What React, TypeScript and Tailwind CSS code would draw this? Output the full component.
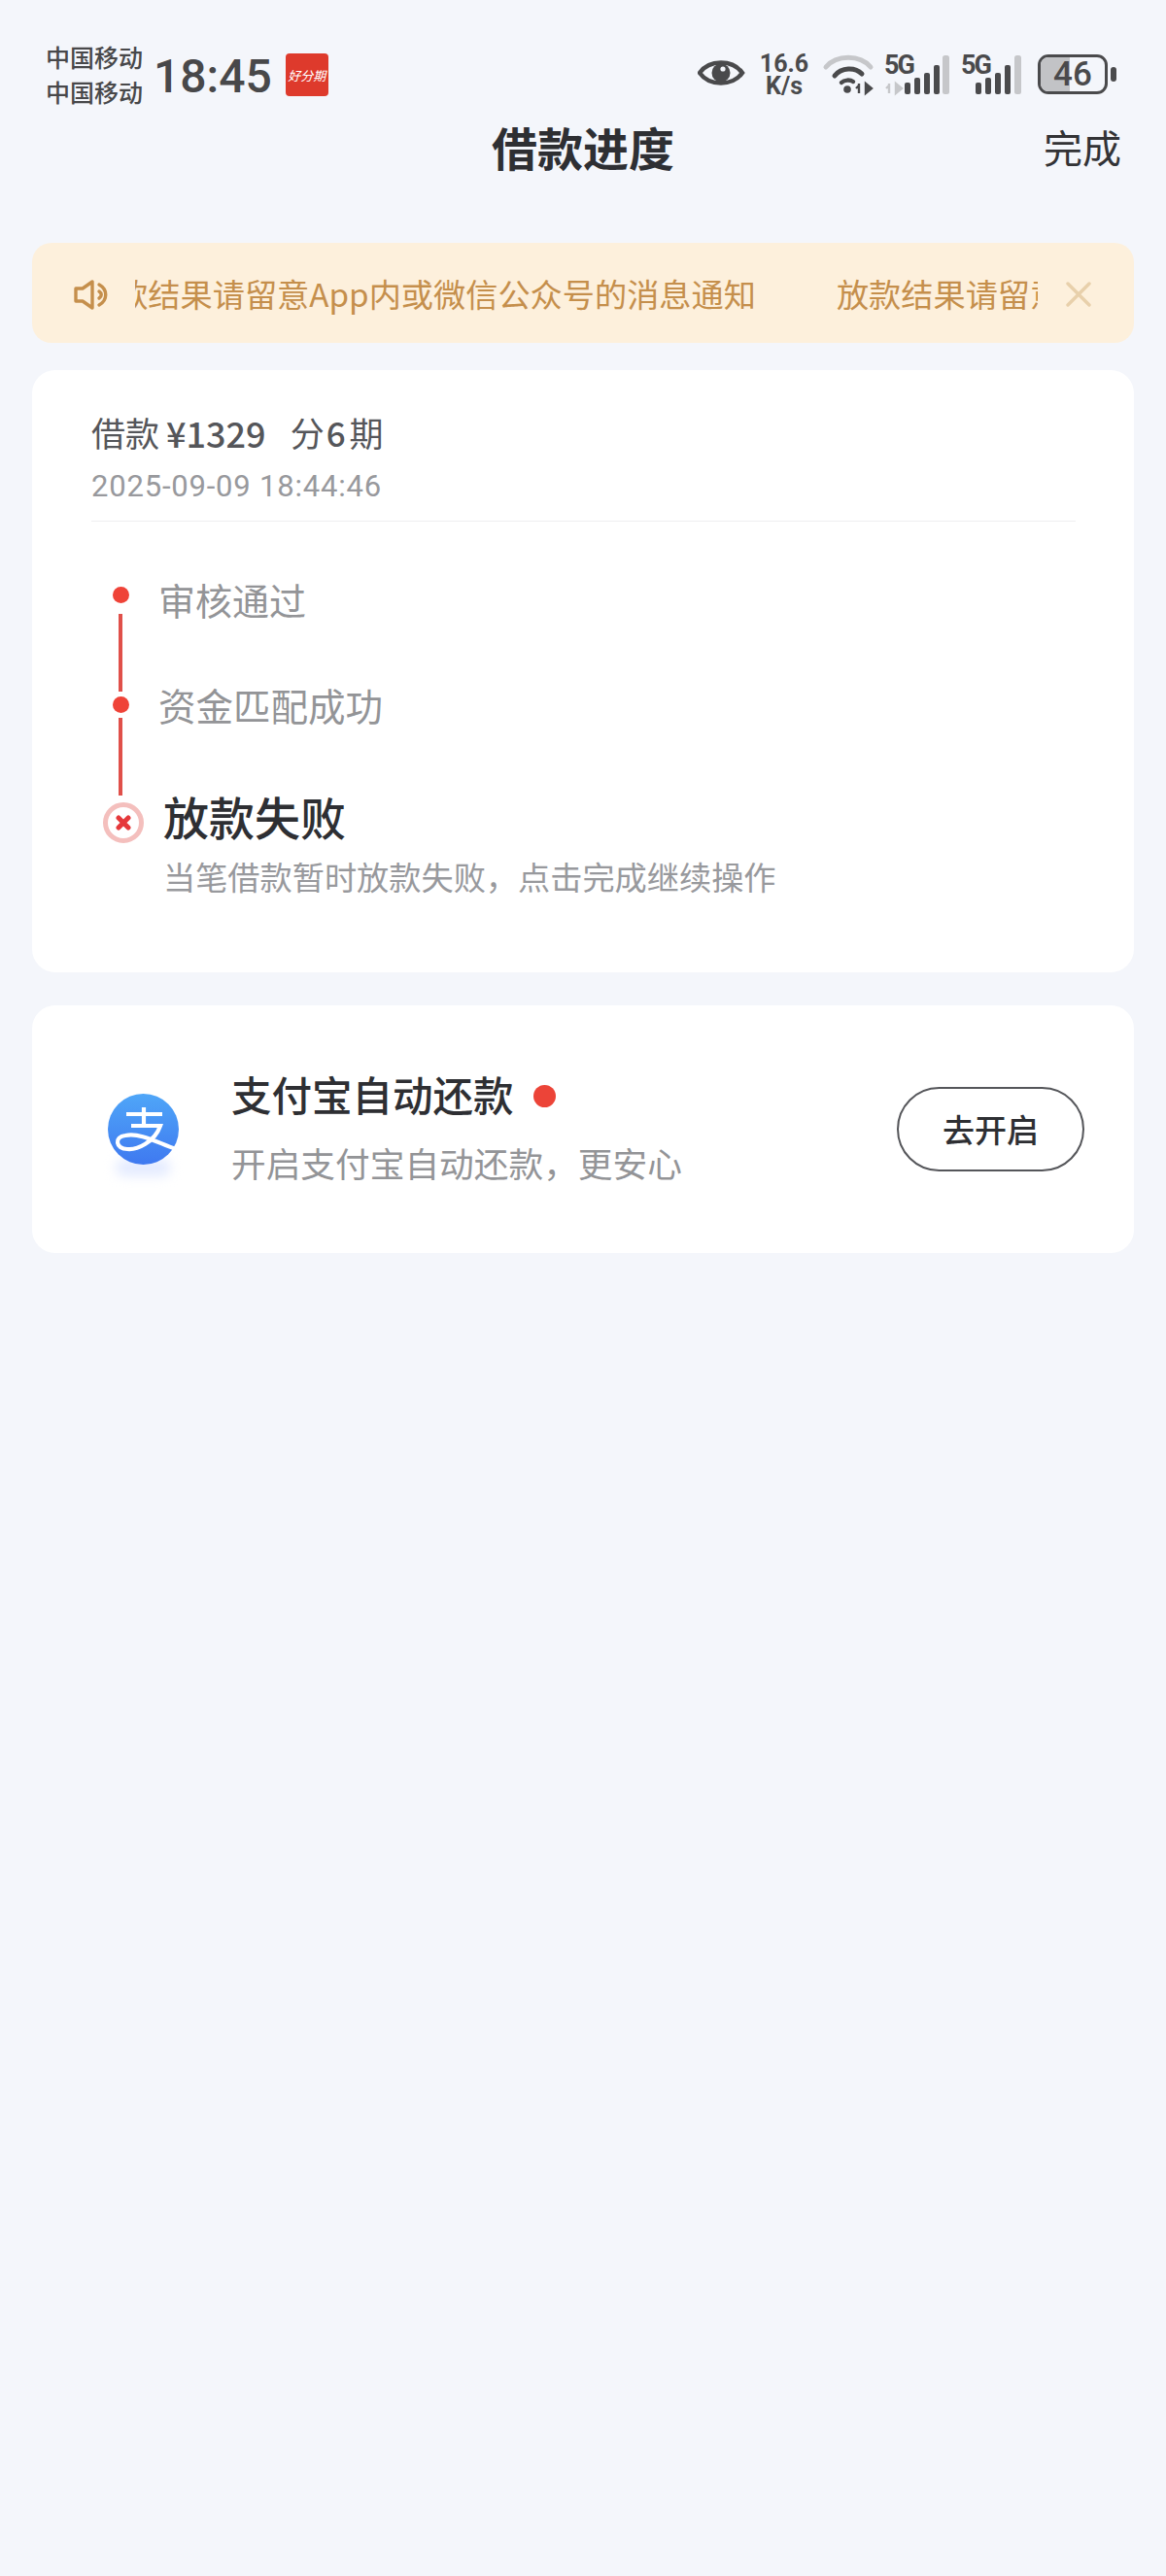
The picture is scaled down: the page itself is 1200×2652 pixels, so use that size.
const CJK = "font-['Noto_Sans_CJK_SC','Noto_Sans',sans-serif]";

function AppBadge() {
  return (
    <div className="ml-[14px] mt-[15px] flex h-[44px] w-[44px] items-center justify-center overflow-hidden rounded-[4px] bg-[#de3a2c]">
      <span className="whitespace-nowrap text-[13px] italic leading-none text-white">好分期</span>
    </div>
  );
}

function StatusIcons() {
  return (
    <svg width="344" height="44" viewBox="0 0 344 44" className="shrink-0">
      {/* eye */}
      <path d="M2 20 C12 6 36 6 46 20 C36 34 12 34 2 20 Z" fill="none" stroke="#4a4a4c" strokeWidth="4.5" />
      <circle cx="24" cy="20" r="9.5" fill="#4a4a4c" />
      <circle cx="26" cy="16" r="2.6" fill="#f4f6fb" />
      {/* wifi */}
      <path d="M132 14 C143 1 167 1 178 14" fill="none" stroke="#c6c7ca" strokeWidth="5" strokeLinecap="round" />
      <path d="M141 23 C148 14 162 14 169 21" fill="none" stroke="#4a4a4c" strokeWidth="5" strokeLinecap="round" />
      <path d="M148 30 C151 27 157 27 160 29" fill="none" stroke="#4a4a4c" strokeWidth="4.5" strokeLinecap="round" />
      <circle cx="154" cy="37" r="3.8" fill="#4a4a4c" />
      <path d="M166 33 L163 36 M166 31 V41 M173 31 V41 L179 36 Z" stroke="#4a4a4c" strokeWidth="2.4" fill="#4a4a4c" />
      {/* sim 1 */}
      <path d="M197 33 L194 36 M197 31 V41 M204 31 V41 L210 36 Z" stroke="#c6c7ca" strokeWidth="2.4" fill="#c6c7ca" />
      <rect x="213" y="30" width="6" height="12" rx="2" fill="#4a4a4c" />
      <rect x="223" y="25" width="6" height="17" rx="2" fill="#4a4a4c" />
      <rect x="233" y="20" width="6" height="22" rx="2" fill="#4a4a4c" />
      <rect x="243" y="12" width="6" height="30" rx="2" fill="#4a4a4c" />
      <rect x="252" y="2" width="7" height="40" rx="2.5" fill="#c6c7ca" />
      {/* sim 2 */}
      <rect x="286" y="30" width="6" height="12" rx="2" fill="#4a4a4c" />
      <rect x="296" y="25" width="6" height="17" rx="2" fill="#4a4a4c" />
      <rect x="306" y="20" width="6" height="22" rx="2" fill="#4a4a4c" />
      <rect x="316" y="12" width="6" height="30" rx="2" fill="#4a4a4c" />
      <rect x="326" y="2" width="7" height="40" rx="2.5" fill="#c6c7ca" />
    </svg>
  );
}

export default function App() {
  return (
    <div className={`${CJK} flex min-h-[2652px] w-[1200px] flex-col bg-[#f4f6fb]`}>
      <header className="relative h-[222px] shrink-0">
        <div className="flex items-start pl-[47px] pr-[26px] pt-[40px]">
          <div className="w-[103px] text-[25px] font-medium leading-[36px] text-[#48484a]">
            <div>中国移动</div>
            <div>中国移动</div>
          </div>
          <span className="ml-[8px] mt-[12px] font-['Roboto',sans-serif] text-[48px] font-medium leading-[54px] text-[#48484a]">18:45</span>
          <AppBadge />
        </div>
        <div className="absolute left-[718px] top-[55px]">
          <StatusIcons />
        </div>
        <div className="absolute left-[780px] top-[54px] w-[54px] text-center font-['Roboto',sans-serif] text-[25px] font-bold leading-[23px] text-[#4a4a4c]">
          <div>16.6</div>
          <div>K/s</div>
        </div>
        <span className="absolute left-[910px] top-[54px] font-['Roboto',sans-serif] text-[27px] font-bold leading-[26px] tracking-[-2px] text-[#4a4a4c]">5G</span>
        <span className="absolute left-[989px] top-[54px] font-['Roboto',sans-serif] text-[27px] font-bold leading-[26px] tracking-[-2px] text-[#4a4a4c]">5G</span>
        <div className="absolute left-[1068px] top-[56px] flex items-center">
          <div className="relative flex h-[41px] w-[72px] items-center justify-center overflow-hidden rounded-[11px] border-[3.5px] border-[#4a4a4c]">
            <div className="absolute inset-y-0 left-0 w-[46%] bg-[#c2c3c6]" />
            <span className="relative font-['Roboto',sans-serif] text-[35px] font-medium leading-none text-[#4a4a4c]">46</span>
          </div>
          <div className="ml-[3px] h-[15px] w-[6px] rounded-full bg-[#4a4a4c]" />
        </div>
        <h1 className="absolute inset-x-0 top-[124px] text-center text-[47px] font-bold leading-[54px] text-[#2e2f33]">借款进度</h1>
        <span className="absolute left-[1074px] top-[127px] text-[40px] leading-[48px] text-[#333336]">完成</span>
      </header>

      <main className="flex flex-col px-[33px]">
        <div className="mt-[28px] flex h-[103px] items-center rounded-[20px] bg-[#fdf0dc] pl-[43px]">
          <svg width="37" height="31" viewBox="0 0 37 31" fill="none" stroke="#c58f4c" strokeWidth="3.4" strokeLinejoin="round" strokeLinecap="round" className="mt-[3px] shrink-0">
            <path d="M2 9 H9 L19 2 V29 L9 22 H2 Z" />
            <path d="M26 5 C35 10 35 21 26 26" />
            <path d="M26 12 C29 14 29 17 26 19" />
          </svg>
          <div className="ml-[26px] w-[929px] shrink-0 overflow-hidden">
            <div className="mt-[1px] flex w-[1500px] whitespace-nowrap text-[33.2px] leading-[48px] text-[#c58f4c]">
              <span className="-ml-[53px]">放款结果请留意App内或微信公众号的消息通知</span>
              <span className="ml-[83px]">放款结果请留意App内或微信公众号的消息通知</span>
            </div>
          </div>
          <svg width="26" height="26" viewBox="0 0 26 26" className="ml-[29px] mt-[3px] shrink-0" stroke="#e8d0ab" strokeWidth="3.4" strokeLinecap="round">
            <path d="M2 2 L24 24 M24 2 L2 24" />
          </svg>
        </div>

        <section className="mt-[28px] flex h-[620px] flex-col rounded-[24px] bg-white px-[61px] pt-[40px]">
          <div className="flex items-center whitespace-nowrap text-[35px] leading-[48px] text-[#55565a]">
            <span>借款</span>
            <span className="ml-[7px] text-[36px] font-medium">¥1329</span>
            <span className="ml-[25px]">分</span>
            <span className="ml-[2px] font-medium">6</span>
            <span className="ml-[4px]">期</span>
          </div>
          <div className="mt-[13px] font-['Roboto',sans-serif] text-[31px] leading-[38px] tracking-[0.8px] text-[#98999d]">2025-09-09 18:44:46</div>
          <div className="mt-[16px] h-px w-[1013px] shrink-0 bg-[#eeeef0]" />

          <div className="relative mt-[60px] flex flex-col">
            <div className="flex h-[40px] items-center pl-[69px] text-[38px] leading-[48px] text-[#939497]">
              <span>审核通过</span>
            </div>
            <div className="mt-[68px] flex h-[40px] items-center pl-[69px] text-[38.5px] leading-[48px] text-[#939497]">
              <span>资金匹配成功</span>
            </div>
            <div className="mt-[67px] pl-[74px] text-[47px] font-medium leading-[56px] text-[#2e2f33]">放款失败</div>
            <div className="mt-[11px] pl-[74px] text-[33.2px] leading-[46px] text-[#98999d]">当笔借款暂时放款失败，点击完成继续操作</div>

            {/* timeline rail */}
            <div className="absolute left-[22px] top-[7px] h-[17px] w-[17px] rounded-full bg-[#ef4338]" />
            <div className="absolute left-[28px] top-[35px] h-[80px] w-[4px] bg-[#e0504a]" />
            <div className="absolute left-[22px] top-[120px] h-[17px] w-[17px] rounded-full bg-[#ef4338]" />
            <div className="absolute left-[28px] top-[142px] h-[80px] w-[4px] bg-[#e0504a]" />
            <div className="absolute left-[12px] top-[229px] flex h-[42px] w-[42px] items-center justify-center rounded-full border-[5px] border-[#f4bfbd] bg-white">
              <svg width="16" height="16" viewBox="0 0 16 16" stroke="#e5383b" strokeWidth="5" strokeLinecap="round">
                <path d="M3 3 L13 13 M13 3 L3 13" />
              </svg>
            </div>
          </div>
        </section>

        <section className="mt-[34px] flex h-[255px] items-center rounded-[24px] bg-white pl-[78px] pr-[51px]">
          <div className="relative h-[73px] w-[73px] shrink-0">
            <div className="absolute -bottom-[12px] left-[8px] right-[8px] h-[18px] rounded-full bg-[#e4ebff] blur-[6px]" />
            <svg width="73" height="73" viewBox="0 0 73 73" className="relative">
              <defs>
                <linearGradient id="alipay" x1="0" y1="0" x2="0" y2="1">
                  <stop offset="0" stopColor="#4fa6f8" />
                  <stop offset="1" stopColor="#3f79f0" />
                </linearGradient>
              </defs>
              <circle cx="36.5" cy="36.5" r="36.5" fill="url(#alipay)" />
              <path d="M19 21 H56 M37 14 V33 M24 33 H54 C48 50 30 58 20 57 C8 57 6 44 18 43 C34 40 50 50 70 57" fill="none" stroke="#fff" strokeWidth="4.2" />
            </svg>
          </div>
          <div className="ml-[54px] flex flex-col">
            <div className="-mt-[5px] flex items-center">
              <span className="text-[41.5px] font-medium leading-[52px] text-[#2e2f33]">支付宝自动还款</span>
              <span className="ml-[20px] mt-[5px] h-[23px] w-[23px] rounded-full bg-[#ec4438]" />
            </div>
            <span className="mt-[22px] text-[35.7px] leading-[46px] text-[#939497]">开启支付宝自动还款，更安心</span>
          </div>
          <button type="button" className="ml-auto flex h-[87px] w-[193px] items-center justify-center rounded-full border-2 border-[#55565a] text-[33px] font-medium leading-none text-[#2e2f33]">
            去开启
          </button>
        </section>
      </main>
    </div>
  );
}
